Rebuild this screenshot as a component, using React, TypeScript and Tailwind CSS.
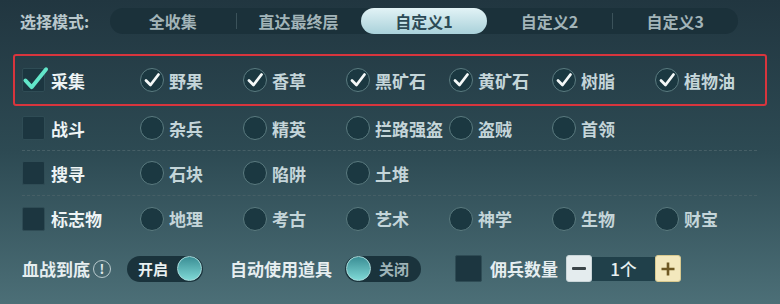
import React from "react"

const font = { fontFamily: '"Noto Sans CJK SC", "Noto Sans", sans-serif' }

const modes = ["全收集", "直达最终层", "自定义1", "自定义2", "自定义3"]

const rows = [
  { title: "采集", checked: true, items: ["野果", "香草", "黑矿石", "黄矿石", "树脂", "植物油"] },
  { title: "战斗", checked: false, items: ["杂兵", "精英", "拦路强盗", "盗贼", "首领"] },
  { title: "搜寻", checked: false, items: ["石块", "陷阱", "土堆"] },
  { title: "标志物", checked: false, items: ["地理", "考古", "艺术", "神学", "生物", "财宝"] },
]

const BigCheck = ({ checked, size = "w-[23px] h-[24px]" }: { checked: boolean; size?: string }) => (
  <div className={`relative ${size} shrink-0 rounded-[2px] bg-[#1c3640] border border-[#2f4c55]`}>
    {checked && (
      <svg className="absolute -left-[1px] -top-[4px]" width="27" height="27" viewBox="0 0 28 28">
        <path d="M3.5 16 L10 23 L25 4.5" fill="none" stroke="#62e6c9" strokeWidth="4" strokeLinecap="round" strokeLinejoin="round" />
      </svg>
    )}
  </div>
)

const Radio = ({ checked }: { checked: boolean }) => (
  <div className="w-[24px] h-[24px] shrink-0 rounded-full bg-[#1b3841] border border-[#5b7b80] flex items-center justify-center">
    {checked && (
      <svg width="18" height="18" viewBox="0 0 18 18">
        <path d="M3 9.5 L7.5 14 L15.5 3.5" fill="none" stroke="#f4f8f8" strokeWidth="2.8" strokeLinecap="round" strokeLinejoin="round" />
      </svg>
    )}
  </div>
)

const Item = ({ label, checked }: { label: string; checked: boolean }) => (
  <div className="w-[103px] flex items-center gap-[5px] shrink-0">
    <Radio checked={checked} />
    <span className="text-[17px] font-bold text-[#c4d5d9] whitespace-nowrap leading-none">{label}</span>
  </div>
)

const Row = ({ title, checked, items }: { title: string; checked: boolean; items: string[] }) => (
  <div className="flex items-center h-full">
    <div className="w-[118px] flex items-center gap-[6px] shrink-0">
      <BigCheck checked={checked} />
      <span className="text-[17px] font-bold text-[#eef4f5] leading-none">{title}</span>
    </div>
    {items.map((it) => (
      <Item key={it} label={it} checked={checked} />
    ))}
  </div>
)

const Knob = () => (
  <div className="w-[25px] h-[25px] rounded-full border border-[#a9dcdc] bg-gradient-to-b from-[#3a8e95] to-[#7fd9d6]" />
)

const Toggle = ({ on }: { on: boolean }) => (
  <div className="w-[76px] h-[26px] rounded-full bg-[#1a333c] flex items-center px-[1px]">
    {on ? (
      <>
        <span className="flex-1 pl-[10px] text-[15px] font-bold text-[#e8f0f1] leading-none">开启</span>
        <Knob />
      </>
    ) : (
      <>
        <Knob />
        <span className="flex-1 pl-[8px] text-[15px] font-bold text-[#9fb4b8] leading-none">关闭</span>
      </>
    )}
  </div>
)

export default function App() {
  return (
    <div
      className="w-[780px] h-[304px] overflow-hidden bg-gradient-to-b from-[#213640] via-[#2d4a53] to-[#4c6f77] flex flex-col"
      style={font}
    >
      {/* mode selector */}
      <div className="h-[40px] flex items-center pt-[1px]">
        <span className="w-[110px] pl-[20px] text-[16px] font-bold text-[#b9c8cc] leading-none">选择模式:</span>
        <div className="w-[628px] h-[26px] rounded-full bg-[#1b313a] flex items-center">
          {modes.map((m, i) => {
            const active = i === 2
            const divider = i === 1 || i === 4
            return (
              <div key={m} className="relative w-[125.6px] h-full flex items-center justify-center">
                {divider && <div className="absolute left-0 top-[5px] bottom-[5px] w-px bg-[#3b525a]" />}
                {active ? (
                  <div className="w-full h-[26px] rounded-full bg-gradient-to-b from-[#e2f3f6] to-[#a9d1da] flex items-center justify-center text-[16px] font-bold text-[#2c4a55] leading-none">
                    {m}
                  </div>
                ) : (
                  <span className="text-[16px] font-bold text-[#a2b4b8] leading-none">{m}</span>
                )}
              </div>
            )
          })}
        </div>
      </div>

      {/* options */}
      <div className="mt-[14px] mx-[13px] h-[52px] border-2 border-[#d8353d] rounded-[3px] pl-[7px]">
        <Row {...rows[0]} />
      </div>
      <div className="flex flex-col pl-[22px]">
        {rows.slice(1).map((r, i) => (
          <div
            key={r.title}
            className={`h-[45px] mr-[23px] ${i < 2 ? "border-b border-dashed border-[#465f66]" : ""}`}
          >
            <Row {...r} />
          </div>
        ))}
      </div>

      {/* bottom settings */}
      <div className="flex-1 flex items-center pl-[22px] pb-[8px]">
        <span className="text-[17px] font-bold text-[#e6eef0] leading-none">血战到底</span>
        <div className="ml-[3px] w-[18px] h-[18px] rounded-full border border-[#b9cacd] flex items-center justify-center text-[13px] font-bold text-[#dfe8ea] leading-none">
          !
        </div>
        <div className="ml-[16px]">
          <Toggle on />
        </div>
        <span className="ml-[27px] text-[17px] font-bold text-[#e6eef0] leading-none">自动使用道具</span>
        <div className="ml-[13px]">
          <Toggle on={false} />
        </div>
        <div className="ml-[34px]">
          <BigCheck checked={false} size="w-[27px] h-[27px]" />
        </div>
        <span className="ml-[8px] text-[17px] font-bold text-[#e6eef0] leading-none">佣兵数量</span>
        <div className="ml-[8px] flex items-center">
          <div className="w-[26px] h-[27px] rounded-[3px] bg-[#e4ecee] border border-[#c9d5d8] flex items-center justify-center">
            <div className="w-[14px] h-[3px] bg-[#3a4448] rounded-[1px]" />
          </div>
          <div className="w-[63px] h-[24px] bg-[#20404a] flex items-center justify-center text-[17px] font-medium text-[#e8f0f1] leading-none">
            1个
          </div>
          <div className="w-[26px] h-[27px] rounded-[3px] bg-[#f3e8bd] border border-[#d8c98f] flex items-center justify-center">
            <svg width="16" height="16" viewBox="0 0 16 16">
              <path d="M8 1.5 V14.5 M1.5 8 H14.5" stroke="#6e5823" strokeWidth="2.6" />
            </svg>
          </div>
        </div>
      </div>
    </div>
  )
}
